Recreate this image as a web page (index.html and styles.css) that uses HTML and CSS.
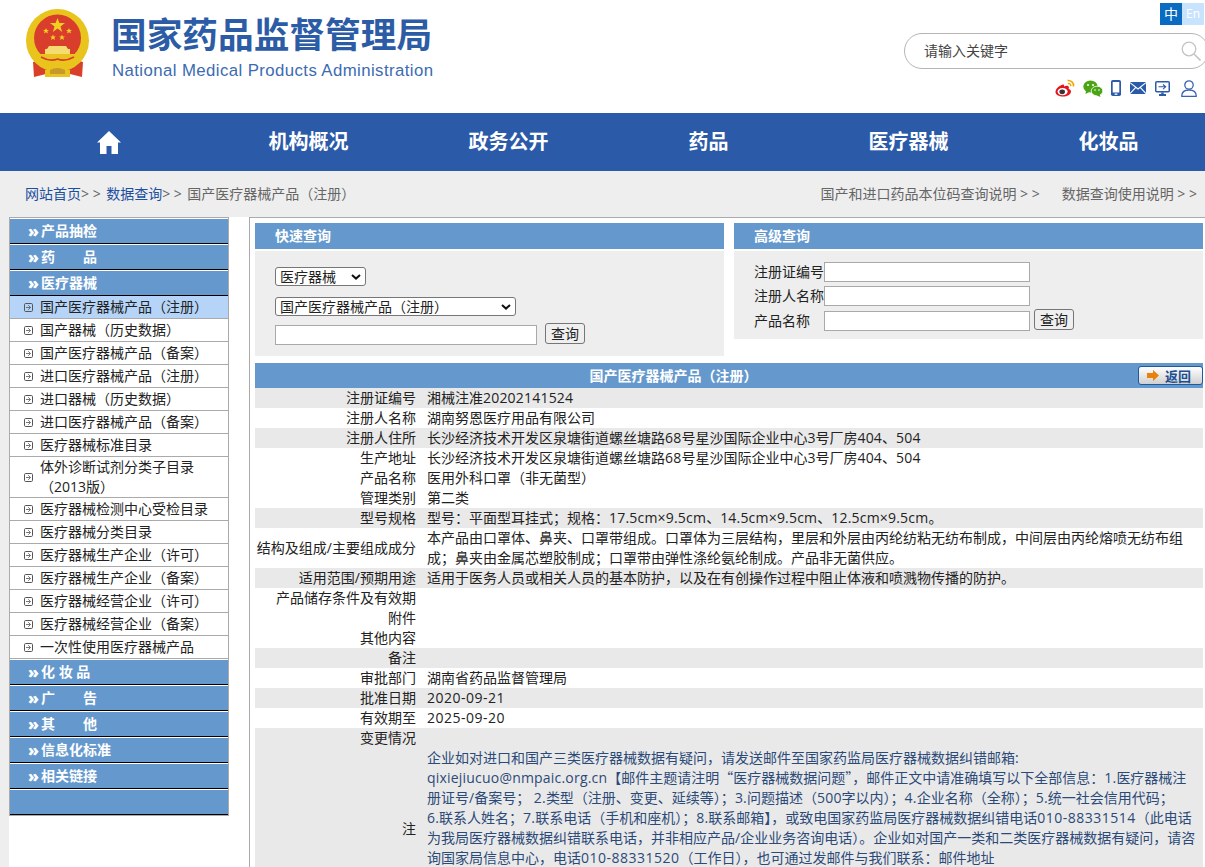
FILE: index.html
```html
<!DOCTYPE html>
<html lang="zh-CN">
<head>
<meta charset="utf-8">
<title>国产医疗器械产品（注册）</title>
<link rel="stylesheet" href="styles.css">
</head>
<body>
<header class="site-header">
  <div class="brand">
    <svg class="emblem" viewBox="26 9 64 70" aria-hidden="true">
      <path d="M33 62 L40 60 L76 60 L83 62 L82 77 L70 74 L64 77 L52 77 L46 74 L34 77 Z" fill="#d9402a"/>
      <circle cx="57.5" cy="40.5" r="31.5" fill="#e8c41c"/>
      <circle cx="57.5" cy="38" r="23.5" fill="#d93d2b"/>
      <polygon fill="#f2cf22" points="57.5,18 59.4,23 65,23 60.5,26.4 62.2,32 57.5,28.6 52.8,32 54.5,26.4 50,23 55.6,23"/>
      <polygon fill="#f2cf22" points="46,28 46.9,30 49,30 47.3,31.3 48,33.5 46,32.2 44,33.5 44.7,31.3 43,30 45.1,30"/>
      <polygon fill="#f2cf22" points="69,28 69.9,30 72,30 70.3,31.3 71,33.5 69,32.2 67,33.5 67.7,31.3 66,30 68.1,30"/>
      <polygon fill="#f2cf22" points="53,34.5 53.9,36.5 56,36.5 54.3,37.8 55,40 53,38.7 51,40 51.7,37.8 50,36.5 52.1,36.5"/>
      <polygon fill="#f2cf22" points="62,34.5 62.9,36.5 65,36.5 63.3,37.8 64,40 62,38.7 60,40 60.7,37.8 59,36.5 61.1,36.5"/>
      <path d="M49 46 H66 L68 49 H70 V54 H45 V49 H47 Z" fill="#f4dc70"/>
      <path d="M36 54 H79 Q76 62 65 66 H50 Q39 62 36 54 Z" fill="#e8c41c"/>
      <path d="M41 57 Q50 62 57.5 59 Q65 62 74 57" fill="none" stroke="#d93d2b" stroke-width="1.6"/>
      <path d="M45 70 H70 V77 H45 Z" fill="#e8c41c"/>
      <path d="M50 70 Q57.5 66 65 70 V74 H50 Z" fill="#c9982a"/>
    </svg>
    <div class="brand-text">
      <div class="brand-cn">国家药品监督管理局</div>
      <div class="brand-en">National Medical Products Administration</div>
    </div>
  </div>
  <div class="tools">
    <div class="lang"><span class="lang-cn">中</span><span class="lang-en">En</span></div>
    <div class="search">
      <span class="search-text">请输入关键字</span>
      <svg class="search-icon" viewBox="0 0 20 20" aria-hidden="true"><circle cx="8" cy="8" r="6.8" fill="none" stroke="#c4c4c4" stroke-width="1.3"/><path d="M13 13 L19.5 19.5" stroke="#c4c4c4" stroke-width="1.6"/></svg>
    </div>
    <div class="socials">
      <svg class="soc soc-weibo" viewBox="0 0 20 18" aria-hidden="true">
        <path d="M8 5.5 C4 6.5 0.5 10 0.5 13 C0.5 16 4.5 17.5 8 17.5 C12 17.5 16 15.5 16 12.5 C16 11 14.6 10.3 13.6 10 C14.2 8.6 14 7.5 13 7 C11.8 6.5 10 7.2 9 7.6 C9.4 6 9 5.2 8 5.5 Z" fill="#e2141c"/>
        <ellipse cx="7.6" cy="12.6" rx="5" ry="3.7" fill="#fff"/>
        <ellipse cx="7.2" cy="12.8" rx="2.8" ry="2.4" fill="#333"/>
        <path d="M12.5 1.5 C16 1 19 3.5 18.5 7.5" fill="none" stroke="#f0a800" stroke-width="1.6"/>
        <path d="M12.8 4.5 C14.7 4.2 16 5.4 15.8 7.3" fill="none" stroke="#f0a800" stroke-width="1.4"/>
      </svg>
      <svg class="soc soc-wechat" viewBox="0 0 20 17" aria-hidden="true">
        <ellipse cx="7.5" cy="6.5" rx="7.2" ry="6" fill="#4ba414"/>
        <path d="M3 10 L2.5 14 L7 11.5 Z" fill="#4ba414"/>
        <ellipse cx="14" cy="11" rx="5.8" ry="4.8" fill="#4ba414" stroke="#fff" stroke-width=".8"/>
        <path d="M16.5 14 L17.5 17 L13.5 15.2 Z" fill="#4ba414"/>
        <circle cx="5" cy="5" r="1" fill="#fff"/><circle cx="10" cy="5" r="1" fill="#fff"/>
        <circle cx="12" cy="10" r=".8" fill="#fff"/><circle cx="16" cy="10" r=".8" fill="#fff"/>
      </svg>
      <svg class="soc soc-phone" viewBox="0 0 10 16" aria-hidden="true">
        <rect x="0" y="0" width="10" height="16" rx="1.8" fill="#2b5aa8"/>
        <rect x="1.7" y="2" width="6.6" height="10.5" fill="#fff"/>
        <rect x="3.6" y="13.5" width="2.8" height="1.3" fill="#fff"/>
      </svg>
      <svg class="soc soc-mail" viewBox="0 0 16 12" aria-hidden="true">
        <rect width="16" height="12" fill="#2b5aa8"/>
        <path d="M0 .6 L8 7 L16 .6 M0 11.6 L5.8 5.4 M16 11.6 L10.2 5.4" fill="none" stroke="#fff" stroke-width="1.1"/>
      </svg>
      <svg class="soc soc-screen" viewBox="0 0 15 15" aria-hidden="true">
        <rect x="0" y="0" width="15" height="11.5" rx="1.8" fill="#2b5aa8"/>
        <rect x="1.5" y="1.5" width="12" height="8.5" fill="#fff"/>
        <path d="M3.5 5.8 H10.5 M8 3.5 L10.7 5.8 L8 8.1" fill="none" stroke="#2b5aa8" stroke-width="1.1"/>
        <path d="M6.3 11.5 H8.7 V13 H11 V15 H4 V13 H6.3 Z" fill="#2b5aa8"/>
      </svg>
      <svg class="soc soc-user" viewBox="0 0 16 17" aria-hidden="true">
        <circle cx="8" cy="5" r="4.2" fill="none" stroke="#3a62b0" stroke-width="1.3"/>
        <path d="M.7 16.3 C.7 12 3.5 10 8 10 C12.5 10 15.3 12 15.3 16.3 Z" fill="none" stroke="#3a62b0" stroke-width="1.3" stroke-linejoin="round"/>
      </svg>
    </div>
  </div>
</header>

<nav class="main-nav">
  <a class="nav-item"><svg class="home" viewBox="0 0 24 23" aria-hidden="true"><path d="M12 0 L24 11.5 L21 11.5 V23 H14.5 V15 H9.5 V23 H3 V11.5 H0 Z" fill="#fff"/></svg></a>
  <a class="nav-item">机构概况</a>
  <a class="nav-item">政务公开</a>
  <a class="nav-item">药品</a>
  <a class="nav-item">医疗器械</a>
  <a class="nav-item">化妆品</a>
</nav>

<div class="crumbs">
  <div class="crumb-left"><a>网站首页</a><span class="sep">&gt; &gt;</span><a>数据查询</a><span class="sep">&gt; &gt;</span><span class="here">国产医疗器械产品（注册）</span></div>
  <div class="crumb-right"><span>国产和进口药品本位码查询说明 &gt; &gt;</span><span>数据查询使用说明 &gt; &gt;</span></div>
</div>

<div class="page">
  <div class="page-inner">
    <aside class="sidebar">
      <div class="side-head"><i>»</i>产品抽检</div>
      <div class="side-head"><i>»</i>药　　品</div>
      <div class="side-head"><i>»</i>医疗器械</div>
      <ul class="side-list">
        <li class="side-item active"><svg class="bul" viewBox="0 0 9 9"><use href="#bullet"/></svg><span>国产医疗器械产品（注册）</span></li>
        <li class="side-item"><svg class="bul" viewBox="0 0 9 9"><use href="#bullet"/></svg><span>国产器械（历史数据）</span></li>
        <li class="side-item"><svg class="bul" viewBox="0 0 9 9"><use href="#bullet"/></svg><span>国产医疗器械产品（备案）</span></li>
        <li class="side-item"><svg class="bul" viewBox="0 0 9 9"><use href="#bullet"/></svg><span>进口医疗器械产品（注册）</span></li>
        <li class="side-item"><svg class="bul" viewBox="0 0 9 9"><use href="#bullet"/></svg><span>进口器械（历史数据）</span></li>
        <li class="side-item"><svg class="bul" viewBox="0 0 9 9"><use href="#bullet"/></svg><span>进口医疗器械产品（备案）</span></li>
        <li class="side-item"><svg class="bul" viewBox="0 0 9 9"><use href="#bullet"/></svg><span>医疗器械标准目录</span></li>
        <li class="side-item tall"><svg class="bul" viewBox="0 0 9 9"><use href="#bullet"/></svg><span>体外诊断试剂分类子目录（2013版）</span></li>
        <li class="side-item"><svg class="bul" viewBox="0 0 9 9"><use href="#bullet"/></svg><span>医疗器械检测中心受检目录</span></li>
        <li class="side-item"><svg class="bul" viewBox="0 0 9 9"><use href="#bullet"/></svg><span>医疗器械分类目录</span></li>
        <li class="side-item"><svg class="bul" viewBox="0 0 9 9"><use href="#bullet"/></svg><span>医疗器械生产企业（许可）</span></li>
        <li class="side-item"><svg class="bul" viewBox="0 0 9 9"><use href="#bullet"/></svg><span>医疗器械生产企业（备案）</span></li>
        <li class="side-item"><svg class="bul" viewBox="0 0 9 9"><use href="#bullet"/></svg><span>医疗器械经营企业（许可）</span></li>
        <li class="side-item"><svg class="bul" viewBox="0 0 9 9"><use href="#bullet"/></svg><span>医疗器械经营企业（备案）</span></li>
        <li class="side-item"><svg class="bul" viewBox="0 0 9 9"><use href="#bullet"/></svg><span>一次性使用医疗器械产品</span></li>
      </ul>
      <div class="side-head"><i>»</i>化 妆 品</div>
      <div class="side-head"><i>»</i>广　　告</div>
      <div class="side-head"><i>»</i>其　　他</div>
      <div class="side-head"><i>»</i>信息化标准</div>
      <div class="side-head"><i>»</i>相关链接</div>
      <div class="side-head"></div>
    </aside>

    <main class="content">
      <div class="search-panels">
        <section class="panel">
          <h2 class="panel-title">快速查询</h2>
          <div class="panel-body quick">
            <div class="sel-wrap sel-a">
              <select class="sel"><option>医疗器械</option></select>
              <svg class="chev" viewBox="0 0 10 6" aria-hidden="true"><path d="M1 1 L5 4.6 L9 1" fill="none" stroke="#111" stroke-width="2"/></svg>
            </div>
            <div class="sel-wrap sel-b">
              <select class="sel"><option>国产医疗器械产品（注册）</option></select>
              <svg class="chev" viewBox="0 0 10 6" aria-hidden="true"><path d="M1 1 L5 4.6 L9 1" fill="none" stroke="#111" stroke-width="2"/></svg>
            </div>
            <div class="quick-row">
              <input class="txt txt-q" type="text">
              <button class="btn" type="button">查询</button>
            </div>
          </div>
        </section>
        <section class="panel">
          <h2 class="panel-title">高级查询</h2>
          <div class="panel-body adv">
            <div class="adv-row"><label class="adv-label">注册证编号</label><input class="txt txt-a" type="text"></div>
            <div class="adv-row"><label class="adv-label">注册人名称</label><input class="txt txt-a" type="text"></div>
            <div class="adv-row adv-last"><label class="adv-label">产品名称</label><input class="txt txt-a" type="text"><button class="btn" type="button">查询</button></div>
          </div>
        </section>
      </div>

      <div class="detail-head">
        <div class="detail-title">国产医疗器械产品（注册）</div>
        <button class="back" type="button"><svg class="back-arrow" viewBox="0 0 12 11" aria-hidden="true"><path d="M0 3 H6 V0 L12 5.5 L6 11 V8 H0 Z" fill="#e8820c"/></svg>返回</button>
      </div>
      <table class="detail">
        <tbody>
          <tr class="g"><th>注册证编号</th><td>湘械注准<span class="lat">20202141524</span></td></tr>
          <tr><th>注册人名称</th><td>湖南努恩医疗用品有限公司</td></tr>
          <tr class="g"><th>注册人住所</th><td>长沙经济技术开发区泉塘街道螺丝塘路<span class="lat">68</span>号星沙国际企业中心3号厂房<span class="lat">404</span>、<span class="lat">504</span></td></tr>
          <tr><th>生产地址</th><td>长沙经济技术开发区泉塘街道螺丝塘路<span class="lat">68</span>号星沙国际企业中心3号厂房<span class="lat">404</span>、<span class="lat">504</span></td></tr>
          <tr><th>产品名称</th><td>医用外科口罩（非无菌型）</td></tr>
          <tr><th>管理类别</th><td>第二类</td></tr>
          <tr class="g"><th>型号规格</th><td>型号：平面型耳挂式；规格：<span class="lat">17.5cm×9.5cm</span>、<span class="lat">14.5cm×9.5cm</span>、<span class="lat">12.5cm×9.5cm</span>。</td></tr>
          <tr><th>结构及组成/主要组成成分</th><td>本产品由口罩体、鼻夹、口罩带组成。口罩体为三层结构，里层和外层由丙纶纺粘无纺布制成，中间层由丙纶熔喷无纺布组成；鼻夹由金属芯塑胶制成；口罩带由弹性涤纶氨纶制成。产品非无菌供应。</td></tr>
          <tr class="g"><th>适用范围/预期用途</th><td>适用于医务人员或相关人员的基本防护，以及在有创操作过程中阻止体液和喷溅物传播的防护。</td></tr>
          <tr><th>产品储存条件及有效期</th><td></td></tr>
          <tr><th>附件</th><td></td></tr>
          <tr><th>其他内容</th><td></td></tr>
          <tr class="g"><th>备注</th><td></td></tr>
          <tr><th>审批部门</th><td>湖南省药品监督管理局</td></tr>
          <tr class="g"><th>批准日期</th><td><span class="date">2020-09-21</span></td></tr>
          <tr><th>有效期至</th><td><span class="date">2025-09-20</span></td></tr>
          <tr class="g"><th>变更情况</th><td></td></tr>
          <tr class="g note"><th>注</th><td>企业如对进口和国产三类医疗器械数据有疑问，请发送邮件至国家药监局医疗器械数据纠错邮箱:<br><span class="lat">qixiejiucuo@nmpaic.org.cn</span>【邮件主题请注明<span class="q">“</span>医疗器械数据问题<span class="q">”</span>，邮件正文中请准确填写以下全部信息：<span class="lat">1.</span>医疗器械注<br>册证号/备案号； <span class="lat">2.</span>类型（注册、变更、延续等）；<span class="lat">3.</span>问题描述（<span class="lat">500</span>字以内）；<span class="lat">4.</span>企业名称（全称）；<span class="lat">5.</span>统一社会信用代码；<br><span class="lat">6.</span>联系人姓名；<span class="lat">7.</span>联系电话（手机和座机）；<span class="lat">8.</span>联系邮箱】，或致电国家药监局医疗器械数据纠错电话<span class="date">010-88331514</span>（此电话<br>为我局医疗器械数据纠错联系电话，并非相应产品/企业业务咨询电话）。企业如对国产一类和二类医疗器械数据有疑问，请咨<br>询国家局信息中心，电话<span class="date">010-88331520</span>（工作日），也可通过发邮件与我们联系：邮件地址</td></tr>
        </tbody>
      </table>
    </main>
  </div>
</div>

<svg class="defs" aria-hidden="true">
  <symbol id="bullet" viewBox="0 0 9 9">
    <rect x=".5" y=".5" width="8" height="8" rx="1.2" fill="none" stroke="#555"/>
    <path d="M2 4.5 H6.4 M4.2 2.2 L6.5 4.5 L4.2 6.8" fill="none" stroke="#555" stroke-width=".8"/>
  </symbol>
</svg>
</body>
</html>
```

FILE: styles.css
```css
* { box-sizing: border-box; }
html, body { margin: 0; padding: 0; height: 867px; overflow: hidden; }
body {
  background: #fff;
  color: #222;
  font: 14px/20px "Open Sans", "Noto Sans CJK SC", sans-serif;
}
.defs { display: none; }

/* header */
.site-header { display: flex; justify-content: space-between; height: 113px; background: #fff; }
.brand { display: flex; align-items: flex-start; padding: 9px 0 0 26px; }
.emblem { width: 64px; height: 70px; display: block; }
.brand-text { margin-left: 22px; }
.brand-cn { margin-top: 5px; margin-left: -1px; font-size: 35.7px; line-height: 40px; font-weight: 700; color: #2d5ca6; white-space: nowrap; }
.brand-en { margin-top: 7px; font: 16.8px/20px "Liberation Sans", sans-serif; letter-spacing: .41px; color: #3b6bb2; white-space: nowrap; }
.tools { width: 301px; display: flex; flex-direction: column; align-items: flex-start; }
.lang { display: flex; margin: 3px 0 0 256px; }
.lang-cn, .lang-en { width: 22px; height: 22px; text-align: center; line-height: 22px; color: #fff; font-size: 14px; }
.lang-cn { background: #0a6cc0; }
.lang-en { background: #c8e3fd; font-size: 12px; }
.search { display: flex; align-items: center; justify-content: space-between; width: 305px; height: 36px; margin-top: 8px; padding: 0 5px 0 19px; border: 1px solid #b5b5b5; border-radius: 18px; flex: none; }
.search-text { color: #444; }
.search-icon { width: 20px; height: 20px; margin-right: 2px; }
.socials { display: flex; align-items: center; height: 18px; margin: 10px 0 0 151px; }
.soc { display: block; flex: none; }
.soc-weibo { width: 20px; height: 18px; }
.soc-wechat { width: 20px; height: 17px; margin-left: 8px; }
.soc-phone { width: 10px; height: 16px; margin-left: 8px; }
.soc-mail { width: 16px; height: 12px; margin-left: 9px; }
.soc-screen { width: 15px; height: 15px; margin-left: 9px; }
.soc-user { width: 16px; height: 17px; margin-left: 11px; }

/* nav */
.main-nav { display: grid; grid-template-columns: repeat(6, 200px); height: 58px; padding-left: 9px; background: #2b5aa8; }
.nav-item { display: flex; align-items: center; justify-content: center; padding-right: 1px; color: #fff; font-size: 20px; font-weight: 700; }
.home { width: 24px; height: 23px; margin-left: 1px; }

/* breadcrumb */
.crumbs { display: flex; justify-content: space-between; align-items: center; height: 46px; padding: 0 8px 0 25px; background: #eee; color: #666; }
.crumb-left a { color: #1c4fa0; }
.sep { margin: 0 5.5px 0 0; color: #666; }
.crumb-right { display: flex; gap: 22px; }

/* page */
.page { padding-left: 9px; background: #eee; height: 650px; }
.page-inner { display: flex; align-items: flex-start; height: 100%; background: #fff; }
.sidebar { width: 220px; flex: none; border: 1px solid #aaa; background: #fff; }
.side-head { display: flex; align-items: center; height: 26px; padding-left: 18px; background: #6599cd; border-top: 1px solid #fff; border-bottom: 1px solid #000; color: #fff; font-weight: 700; white-space: pre; }
.side-head i { width: 13px; font-style: normal; font-size: 16px; font-weight: 800; }
.side-list { list-style: none; margin: 0; padding: 0; }
.side-item { display: flex; align-items: center; min-height: 23px; padding-left: 14px; border-bottom: 1px solid #aaa; }
.side-item.active { background: #b5d4f7; }
.side-item.tall { min-height: 41px; padding-right: 20px; }
.bul { width: 9px; height: 9px; flex: none; margin-right: 7px; }
.content { flex: none; width: 956px; height: 100%; margin-left: 20px; border-left: 1px solid #aaa; border-top: 1px solid #aaa; padding: 5px 2px 0 5px; }
.search-panels { display: grid; grid-template-columns: 469px 469px; column-gap: 10px; align-items: start; }
.panel-title { margin: 0 0 2px; height: 26px; padding-left: 20px; background: #6599cd; color: #fff; font-size: 14px; line-height: 26px; font-weight: 700; }
.panel-body { background: #eee; }
.quick { height: 105px; padding: 16px 20px 0; display: flex; flex-direction: column; align-items: flex-start; }
.sel-wrap { position: relative; height: 19px; }
.sel-a { width: 91px; }
.sel-b { width: 241px; margin-top: 11px; }
.sel { appearance: none; display: block; width: 100%; height: 19px; padding: 0 0 0 4px; font: 14px/17px "Open Sans", "Noto Sans CJK SC", sans-serif; color: #222; background: #fff; border: 1px solid #767676; border-radius: 3px; }
.chev { position: absolute; right: 5px; top: 7px; width: 10px; height: 6px; pointer-events: none; }
.quick-row { display: flex; align-items: flex-start; gap: 8px; margin-top: 7px; }
.txt { display: block; height: 20px; padding: 0 3px; border: 1px solid #a9a9a9; background: #fff; font: inherit; }
.txt-q { width: 262px; margin-top: 2px; }
.btn { width: 40px; height: 21px; padding: 0; font: 14px/17px "Open Sans", "Noto Sans CJK SC", sans-serif; color: #222; background: #efefef; border: 1px solid #767676; border-radius: 3px; }
.adv { height: 88px; padding: 11px 20px 0; }
.adv-row { display: flex; align-items: center; height: 20px; margin-bottom: 4px; }
.adv-last { margin-top: 5px; }
.adv-label { width: 70px; flex: none; white-space: nowrap; }
.txt-a { width: 206px; }
.adv-last .btn { margin-left: 4px; margin-top: -3px; }

.detail-head { display: flex; align-items: center; height: 25px; margin-top: 7px; background: #6599cd; }
.detail-title { flex: 1; padding-right: 46px; text-align: center; color: #fff; font-weight: 700; }
.back { display: flex; align-items: center; gap: 6px; width: 65px; height: 19px; padding: 0 0 0 8px; border: 1px solid #1c5c9c; border-radius: 3px; background: linear-gradient(#fff, #d0d0d0); color: #1c4f92; font: 700 13px/17px "Noto Sans CJK SC", sans-serif; }
.back-arrow { width: 12px; height: 11px; }
.detail { width: 948px; table-layout: fixed; border-collapse: collapse; }
.detail th { width: 172px; padding: 0 11px 0 0; font-weight: 400; text-align: right; vertical-align: middle; line-height: 20px; white-space: nowrap; }
.detail td { padding: 0; line-height: 20px; vertical-align: top; }
.detail tr { height: 20px; }
.detail tr.g { background: #e9e9e9; }
.lat { letter-spacing: .2px; }
.date { letter-spacing: .5px; }
.q { font-family: "Noto Sans CJK SC", sans-serif; line-height: 0; }
.note { height: 162px !important; }
.note td { color: #2c4a78; white-space: nowrap; }
```
